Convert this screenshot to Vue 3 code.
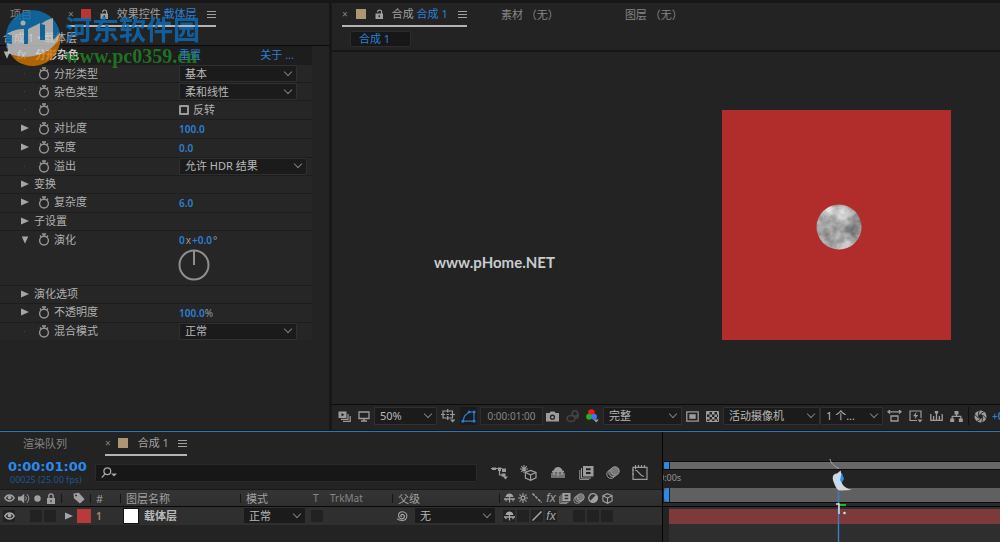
<script setup>
import { h, ref } from 'vue'

const icons = {
  watch: [12, 13, '<g fill="none" stroke="currentColor" stroke-width="1.4"><circle cx="6" cy="7.6" r="4.4"/><path d="M4 1h4M6 1v2.4M2 2.6l1.4 1.4M10 2.6L8.6 4"/></g>'],
  lock: [10, 11, '<path fill="currentColor" fill-rule="evenodd" d="M1 5h8v6H1zM4.4 7v2.2h1.2V7z"/><path fill="none" stroke="currentColor" stroke-width="1.3" d="M2.8 5V3a2.2 2.2 0 0 1 4.4 0v2"/>'],
  unlock: [9, 11, '<path fill="currentColor" fill-rule="evenodd" d="M.5 4.6h7.500v5.400h-7.500zM3.600 6.300v2h1.300v-2z"/><path fill="none" stroke="currentColor" stroke-width="1.2" d="M2.600 3.200C2.600 .4 6.600 .2 6.600 3v2"/>'],
  menu: [9, 9, '<path stroke="currentColor" stroke-width="1.2" d="M0 1.5h9M0 4.5h9M0 7.5h9"/>'],
  right: [8, 8, '<path fill="currentColor" d="M0 0.5L8 4L0 7.5z"/>'],
  down: [8, 8, '<path fill="currentColor" d="M0.8 0.5h6.4L4 7.8z"/>'],
  eye: [11, 8, '<path fill="none" stroke="currentColor" stroke-width="1.5" d="M.8 4C3 0 8 0 10.2 4C8 8 3 8 .8 4z"/><circle cx="5.5" cy="3.6" r="1.9" fill="currentColor"/>'],
  speaker: [12, 11, '<path fill="currentColor" d="M0 3.5h3L6.2.8v9.4L3 7.5H0z"/><path fill="none" stroke="currentColor" d="M7.6 3.5q1.6 2 0 4M9 1.2q3.6 4.3 0 8.6"/>'],
  dot: [7, 7, '<circle cx="3.5" cy="3.5" r="3.2" fill="currentColor"/>'],
  tag: [12, 12, '<path fill="currentColor" fill-rule="evenodd" d="M.5 1.5L5.8.8l5.8 6.4-4.7 4.4L.9 6.2zM3 2.4a1 1 0 1 0 .1 2a1 1 0 0 0-.1-2z"/>'],
  search: [17, 12, '<g fill="none" stroke="currentColor" stroke-width="1.3"><circle cx="6.3" cy="4.2" r="3.4"/><path d="M4 6.8L.8 10.6"/></g><path fill="currentColor" d="M10 6.5h6l-3 3z"/>'],
  stack: [13, 11, '<path fill="currentColor" fill-rule="evenodd" d="M.5.5h8v6.5h-8zM3.5 2v3.5L6.5 3.8z"/><path fill="none" stroke="currentColor" stroke-width="1.2" d="M3 8.4h7V3M5 10.4h7.2V5"/>'],
  monitor: [12, 11, '<path fill="none" stroke="currentColor" stroke-width="1.3" d="M1 1h10v6.5H1zM6 7.5v2.3M3 10h6"/>'],
  region: [15, 14, '<path fill="none" stroke="currentColor" stroke-width="1.2" d="M2 2h9.5v7H2zM0 5.5h4M9 5.5h5M6.7 0v3.5M6.7 7v4M5.5 5.5h2.4"/><path fill="currentColor" d="M9 10.5h5.4l-2.7 3z"/>'],
  mask: [15, 13, '<path fill="none" stroke="currentColor" stroke-width="1.2" d="M2 11.2L3.5 6L8 2h5v9.2z"/><path fill="currentColor" d="M.5 10h2.600v2.500h-2.600zM7 .8h2.400v2.400h-2.400zM11.900.8h2.500v2.500h-2.500zM11.900 10h2.500v2.500h-2.500z"/>'],
  camera: [13, 11, '<path fill="currentColor" fill-rule="evenodd" d="M0 2h3.5l1-1.6h4L9.5 2H13v8.5H0zM6.5 3.6a2.6 2.6 0 1 0 0 5.2a2.6 2.6 0 0 0 0-5.2z"/><circle cx="6.5" cy="6.2" r="1.3" fill="currentColor"/>'],
  ghost: [14, 13, '<g fill="none" stroke="currentColor" stroke-width="1.6"><circle cx="9" cy="3.5" r="2.7"/><ellipse cx="5" cy="8.500" rx="4" ry="3"/><path d="M8 8h3c1-1 1.500-2 1.500-4"/></g>'],
  rgb: [13, 14, '<circle cx="5.4" cy="3.6" r="3.300" fill="#f01818"/><circle cx="3.1" cy="7.700" r="3" fill="#18b818"/><circle cx="8" cy="7.700" r="3" fill="#4a70f0"/><path fill="currentColor" d="M7.5 10.5h5.4l-2.7 3z"/>'],
  roi: [13, 11, '<path fill="none" stroke="currentColor" stroke-width="1.3" d="M.8.8h11.4v9.4H.8z"/><path fill="currentColor" d="M3.3 3.2h6.4v4.6H3.3z"/>'],
  checker: [13, 11, '<path fill="none" stroke="currentColor" d="M.5.5h12v10H.5z"/><path fill="currentColor" d="M1 1h2.5v2.5H1zM6 1h2.5v2.5H6zM3.5 3.5H6V6H3.5zM8.5 3.5H11V6H8.5zM1 6h2.5v2.5H1zM6 6h2.5v2.5H6zM3.5 8.5H6V10H3.5zM8.5 8.5H11V10H8.5zM11 1h1.5v2.5H11zM11 6h1.5v2.5H11z"/>'],
  aspect: [15, 12, '<path fill="none" stroke="currentColor" stroke-width="1.3" d="M1 1.8h13M3 0L1 1.8L3 3.6M12 0l2 1.8l-2 1.8M4 6h7v5H4z"/>'],
  fast: [14, 13, '<path fill="none" stroke="currentColor" stroke-width="1.2" d="M8 10.5H1V1h11v7"/><path fill="currentColor" d="M7.5 1.8L4 6.2h2.4L5.5 9.6L9.2 5H6.8zM8.5 9.5h5l-2.5 3z"/>'],
  timeline: [13, 11, '<path fill="none" stroke="currentColor" stroke-width="1.3" d="M.8 3v6.3h11.4V3M3.6 9V5M6.5 9V3M9.4 9V5"/><path fill="currentColor" d="M4.8 0h3.4v2L6.5 3.6L4.8 2z"/>'],
  flow: [13, 11, '<path fill="currentColor" d="M4.5 0h4v3.6h-4zM.2 7.4h4V11h-4zM8.8 7.4h4V11h-4z"/><path fill="none" stroke="currentColor" stroke-width="1.2" d="M6.5 3v2.4M2.2 8V5.4h8.6V8"/>'],
  aperture: [13, 13, '<circle cx="6.5" cy="6.5" r="6" fill="currentColor"/><path fill="#232323" d="M6.5 3.9l2.3 1.3v2.6L6.5 9.1L4.2 7.8V5.2z"/><path stroke="#232323" stroke-width=".9" d="M6.5 3.9L10.5 1.2M8.8 5.2l3.2 3M8.8 7.8l-1 4.5M6.5 9.1l-4 2.6M4.2 7.8L1 4.8M4.2 5.2L5.2.8"/>'],
  tree: [17, 14, '<path fill="none" stroke="currentColor" stroke-width="1.2" d="M0 2.5h11M8.500 2.5v6.500h3"/><path fill="currentColor" d="M1 1.500h4v2.500H1zM7 1.500h3v3.5H7zM11 2.5h4V6h-4zM10.500 7.500h4v3h-4zM12 10.5h5l-2.5 3z"/>'],
  draft: [18, 16, '<path stroke="currentColor" stroke-width="1.1" d="M4 0v8M0 4h8M1.2 1.2l5.6 5.6M6.8 1.2L1.2 6.8"/><path fill="none" stroke="currentColor" stroke-width="1.2" d="M10.5 5.4L16 7.5v5.4l-5.4 2.4L5.4 13V7.5zM5.4 7.5l5.2 2.4L16 7.5M10.6 10v5"/>'],
  shy: [16, 13, '<path fill="currentColor" fill-opacity=".65" d="M1 7h14v5H1z"/><path fill="currentColor" d="M3.5 5.200C4 2.400 6 1 8 1S12 2.400 12.6 5.2z"/><path stroke="currentColor" stroke-width="1.600" d="M2 5.600h12M8 4v6M4 6v3M12 6v3"/>'],
  film: [15, 14, '<path fill="currentColor" fill-rule="evenodd" d="M4 0h10.5v10.5H4zM7 2.2v2h4.6v-2zM7 6v2h4.6V6z"/><path fill="none" stroke="currentColor" d="M2.5 2v10H12M.8 4v9.4h9.4"/>'],
  blur: [14, 13, '<circle cx="5" cy="8.2" r="4.2" fill="none" stroke="currentColor"/><circle cx="7" cy="6.6" r="4.2" fill="#555" stroke="currentColor"/><circle cx="9" cy="5" r="4.2" fill="#777" stroke="currentColor"/>'],
  graph: [16, 15, '<path fill="none" stroke="currentColor" stroke-width="1.2" d="M1 2.4h14v12H1zM3 5c4 0 4 6 9 6.5M3.5 0v4M6.5 0v3M9.5 0v3M12.5 0v3M0 5h2M0 9h2"/>'],
  shySm: [11, 10, '<path fill="currentColor" d="M1.5 4C2 1.4 3.6.4 5.5.4S9 1.4 9.5 4zM0 5.2h11v1.6H0z"/><path fill="none" stroke="currentColor" stroke-width="1.2" d="M5.5 3v6.6M2 6v2.2M9 6v2.2"/>'],
  sun: [10, 10, '<circle cx="5" cy="5" r="2" fill="none" stroke="currentColor" stroke-width="1.3"/><path stroke="currentColor" stroke-width="1.1" d="M5 0v2M5 8v2M0 5h2M8 5h2M1.5 1.5l1.2 1.2M7.3 7.3l1.2 1.2M8.5 1.5L7.3 2.7M2.7 7.3L1.5 8.5"/>'],
  backslash: [10, 10, '<path stroke="currentColor" stroke-width="1.5" stroke-dasharray="3 1" d="M.5.5l9 9"/>'],
  slash: [10, 10, '<path stroke="currentColor" stroke-width="1.5" d="M.5 9.5l9-9"/>'],
  half: [10, 10, '<circle cx="5" cy="5" r="4.3" fill="none" stroke="currentColor" stroke-width="1.2"/><path fill="currentColor" d="M8.4 1.6A4.8 4.8 0 0 1 1.6 8.4z"/>'],
  cube: [11, 11, '<path fill="none" stroke="currentColor" stroke-width="1.1" d="M5.5.7l4.6 2v5.2l-4.6 2.4L.9 7.9V2.7zM.9 2.7l4.6 2.2l4.6-2.2M5.5 5v5"/>'],
  whip: [12, 12, '<path fill="none" stroke="currentColor" stroke-width="1.1" d="M6 6.400c-1.600.4-1.800-2 .2-2c3 0 3 4.400-.4 4.400c-4.400 0-4.400-7 .6-7c5.600 0 6.400 8.600-.4 8.600c-2.400 0-4-.8-5-1.800"/>'],
}

const Icon = (props) => {
  const [w, ht, body] = icons[props.name]
  return h('svg', {
    class: 'ico', width: w, height: ht, viewBox: `0 0 ${w} ${ht}`, 'aria-hidden': 'true', innerHTML: body,
  })
}
Icon.props = ['name']

const props = [
  { label: '分形类型', watch: true, select: '基本' },
  { label: '杂色类型', watch: true, select: '柔和线性' },
  { label: '', watch: true, check: '反转' },
  { label: '对比度', watch: true, tw: 'right', value: '100.0' },
  { label: '亮度', watch: true, tw: 'right', value: '0.0' },
  { label: '溢出', watch: true, select: '允许  HDR 结果', wide: true },
  { label: '变换', tw: 'right' },
  { label: '复杂度', watch: true, tw: 'right', value: '6.0' },
  { label: '子设置', tw: 'right' },
  { label: '演化', watch: true, tw: 'down', dial: true },
  { label: '演化选项', tw: 'right' },
  { label: '不透明度', watch: true, tw: 'right', value: '100.0', unit: '%' },
  { label: '混合模式', watch: true, select: '正常' },
]
const inverted = ref(false)
const query = ref('')
const playhead = ref(52)
const headSwitches = ['shySm', 'sun', 'backslash', 'fx', 'film', 'blur', 'half', 'cube']
const rowSwitches = ['shySm', '', 'slash', 'fx', null, '', '', '']
</script>

<template>
  <div class="app">
    <div class="upper">
      <section class="panel effects">
        <div class="tabs">
          <button class="tab project">项目</button>
          <div class="tab active fx-tab">
            <button class="close" aria-label="关闭">×</button>
            <i class="chip red"></i>
            <Icon name="unlock" />
            <span>效果控件 <b class="blue">载体层</b></span>
            <Icon name="menu" />
          </div>
        </div>
        <div class="crumb">合成  1  •  载体层</div>
        <div class="fx-head">
          <Icon name="down" />
          <em class="fx">fx</em>
          <span class="fx-name">分形杂色</span>
          <button class="link reset">重置</button>
          <button class="link about">关于 ...</button>
        </div>
        <div class="props">
          <div v-for="(p, i) in props" :key="i" class="prop" :class="{ tall: p.dial }">
            <span class="twirl"><Icon v-if="p.tw" :name="p.tw" /><i v-else class="pip"></i></span>
            <span class="name"><Icon v-if="p.watch" name="watch" />{{ p.label }}</span>
            <span class="val">
              <span v-if="p.select" class="drop" :class="{ wide: p.wide }">
                <select :aria-label="p.label"><option>{{ p.select }}</option></select>
              </span>
              <label v-if="p.check" class="check"><input v-model="inverted" type="checkbox" />{{ p.check }}</label>
              <template v-if="p.value"><button class="num">{{ p.value }}</button><span class="unit">{{ p.unit }}</span></template>
              <template v-if="p.dial">
                <span class="angle"><button class="num">0</button><span class="unit">x</span><button class="num">+0.0</button><span class="unit">°</span></span>
                <svg class="dial" width="32" height="32" viewBox="0 0 32 32"><g fill="none" stroke="#8f8f8f" stroke-width="2"><circle cx="16" cy="16" r="14.500" /><path d="M16 1v15" /></g></svg>
              </template>
            </span>
          </div>
        </div>
      </section>

      <section class="panel viewer">
        <div class="tabs">
          <div class="tab active comp-tab">
            <button class="close" aria-label="关闭">×</button>
            <i class="chip tan"></i>
            <Icon name="unlock" />
            <span>合成 <b class="blue">合成 1</b></span>
            <Icon name="menu" />
          </div>
          <button class="tab footage">素材 （无）</button>
          <button class="tab layer">图层 （无）</button>
        </div>
        <div class="nav"><button class="comp-btn">合成 1</button></div>
        <div class="stage">
          <div class="solid">
            <svg class="moon" width="46" height="46" viewBox="0 0 46 46">
              <defs>
                <filter id="cloud" x="0" y="0" width="100%" height="100%" color-interpolation-filters="sRGB">
                  <feTurbulence type="fractalNoise" baseFrequency="0.06" numOctaves="4" seed="8" />
                  <feColorMatrix values="0.8 0 0 0 0.24  0.8 0 0 0 0.24  0.8 0 0 0 0.24  0 0 0 0 1" />
                </filter>
                <clipPath id="disc"><circle cx="23" cy="23" r="22.5" /></clipPath>
              </defs>
              <rect width="46" height="46" filter="url(#cloud)" clip-path="url(#disc)" />
            </svg>
          </div>
          <span class="stamp">www.pHome.NET</span>
        </div>
        <div class="toolbar">
          <Icon name="stack" />
          <Icon name="monitor" />
          <span class="drop zoom"><select aria-label="缩放"><option>50%</option></select></span>
          <Icon name="region" />
          <span class="boxed on"><Icon name="mask" /></span>
          <button class="time">0:00:01:00</button>
          <Icon name="camera" />
          <span class="dim"><Icon name="ghost" /></span>
          <Icon name="rgb" />
          <span class="drop res"><select aria-label="分辨率"><option>完整</option></select></span>
          <Icon name="roi" />
          <Icon name="checker" />
          <span class="drop cam"><select aria-label="摄像机"><option>活动摄像机</option></select></span>
          <span class="drop views"><select aria-label="视图"><option>1 个...</option></select></span>
          <Icon name="aspect" />
          <Icon name="fast" />
          <Icon name="timeline" />
          <Icon name="flow" />
          <i class="rule"></i>
          <Icon name="aperture" />
          <button class="num">+0.0</button>
        </div>
      </section>
    </div>

    <section class="panel lower">
      <div class="outline">
        <div class="tabs">
          <button class="tab queue">渲染队列</button>
          <div class="tab active tl-tab">
            <button class="close" aria-label="关闭">×</button>
            <i class="chip tan"></i>
            <span>合成  1</span>
            <Icon name="menu" />
          </div>
        </div>
        <div class="controls">
          <div class="clock"><strong>0:00:01:00</strong><small>00025 (25.00 fps)</small></div>
          <label class="search"><Icon name="search" /><input v-model="query" type="text" aria-label="搜索" /></label>
          <div class="tools">
            <Icon name="tree" /><Icon name="draft" /><Icon name="shy" /><Icon name="film" /><Icon name="blur" /><Icon name="graph" />
          </div>
        </div>
        <table class="layers">
          <colgroup><col class="c-av" /><col class="c-label" /><col class="c-no" /><col class="c-name" /><col class="c-mode" /><col class="c-t" /><col class="c-mat" /><col class="c-parent" /><col /></colgroup>
          <thead>
            <tr>
              <th><span class="av"><Icon name="eye" /><Icon name="speaker" /><Icon name="dot" /><Icon name="lock" /></span></th>
              <th class="tagcell"><Icon name="tag" /></th>
              <th>#</th>
              <th>图层名称</th>
              <th>模式</th>
              <th class="bare">T</th>
              <th>TrkMat</th>
              <th>父级</th>
              <th><span class="switches"><span v-for="s in headSwitches" :key="s" class="sw"><em v-if="s === 'fx'" class="fx">fx</em><Icon v-else :name="s" /></span></span></th>
            </tr>
          </thead>
          <tbody>
            <tr>
              <td><span class="boxes"><i class="box"><Icon name="eye" /></i><i class="box second"></i><i class="box"></i></span></td>
              <td><span class="color"><Icon name="right" /><i class="swatch"></i></span></td>
              <td><b class="idx">1</b></td>
              <td><span class="lname"><i class="white"></i><b>载体层</b></span></td>
              <td><span class="drop mode"><select aria-label="模式"><option>正常</option></select></span></td>
              <td class="bare"><i class="box"></i></td>
              <td></td>
              <td><span class="parent"><Icon name="whip" /><span class="drop"><select aria-label="父级"><option>无</option></select></span></span></td>
              <td><span class="switches"><span v-for="(s, i) in rowSwitches" :key="i" class="sw" :class="{ cell: s !== null }"><em v-if="s === 'fx'" class="fx">fx</em><Icon v-else-if="s" :name="s" /></span></span></td>
            </tr>
          </tbody>
        </table>
      </div>

      <div class="timeline">
        <div class="navigator"><i class="handle"></i></div>
        <div class="ruler"><span>0:00s</span></div>
        <div class="workarea"><i class="handle"></i></div>
        <div class="cache"></div>
        <div class="track"><i class="bar"></i></div>
        <div class="playhead" :style="{ left: playhead + '%' }">
          <svg width="34" height="84" viewBox="0 0 34 84">
            <path d="M12.500 28v56" stroke="#3a80c4" stroke-width="1.400" />
            <path d="M13 46h7v2h-7z" fill="#12c21c" />
            <path d="M4 1c1 5 4 6 6 8l3 1.500" fill="none" stroke="#a8a8a8" />
            <path d="M13 15h3l2 6-3 5h-2z" fill="#2d8ceb" />
            <path d="M14.700 12.500L11 15.500C6 16 6 20 8 25c1.500 4 3 7 6 7.500l12-.5c-4-1-7-2.500-9-5l-3-5c1-3 1.500-6 .7-9.500z" fill="#d6d6d6" />
            <path d="M9.500 17.500l3.500-1.500 1 7 2 4-3 2-3-5z" fill="#bfddff" />
            <path d="M10 46h3v10" fill="none" stroke="#ddd" stroke-width="1.500" />
            <circle cx="18.500" cy="55" r="1.300" fill="#ddd" />
          </svg>
        </div>
      </div>
    </section>

    <div class="mark" aria-hidden="true">
      <svg width="58" height="58" viewBox="0 0 58 58">
        <path d="M1 31A27 27 0 0 1 55 24C45 36 24 43 1 38z" fill="#0d74b8" />
        <path d="M3 38c20 5 42-3 52-15c3 14-7 32-26 33C14 56 6 48 3 38z" fill="#d97900" />
        <path d="M2 33l5 1v-9l-5-1c6-4 11-5 17-5v15h4V19l12-6v17h5V15l-4-1c5-4 9-5 12-6v22c4-3 6-5 7-8c-1 20-31 31-52 21z" fill="#d2d2d2" />
        <circle cx="18" cy="13" r="2.500" fill="#d2d2d2" />
      </svg>
      <div class="words"><span class="cn">河东软件园</span><span class="url">www.pc0359.cn</span></div>
    </div>
  </div>
</template>

<style>
html, body { background: #171717; }
</style>

<style scoped>
.app { position: relative; display: flex; flex-direction: column; gap: 1px; min-height: 100vh; box-sizing: border-box; padding-top: 3px; overflow: hidden; background: #171717; color: #a6a6a6; font: 11px/16px "Noto Sans", "Noto Sans CJK SC", sans-serif; }
.app *, .app *::before { box-sizing: border-box; }
button { padding: 0; border: 0; background: none; color: inherit; font: inherit; white-space: nowrap; }
i { display: block; flex: none; }
.ico { display: block; flex: none; }
.upper { flex: 1; display: flex; gap: 3px; min-height: 427px; }
.panel { background: #232323; }
.effects { flex: none; width: 329px; }
.viewer { flex: 1; min-width: 0; display: flex; flex-direction: column; overflow: hidden; }
.blue, .num, .link { color: #2d7fd3; font-weight: 400; }

.tabs { display: flex; height: 24px; color: #858585; }
.tab { display: flex; align-items: center; height: 24px; white-space: pre; }
.tab.active { border-bottom: 2px solid #b4b4b4; color: #a0a0a0; }
.project { margin-left: 10px; width: 58px; }
.close { color: #858585; font-size: 10px; }
.chip { width: 10px; height: 10px; }
.chip.red { background: #b83538; }
.chip.tan { background: #ac9674; }
.fx-tab { width: 148px; }
.fx-tab .chip { margin: 0 9px 0 7px; }
.fx-tab > span { margin: 0 auto 0 8px; }
.comp-tab > span { margin: 0 auto 0 8px; }
.comp-tab { width: 125px; margin-left: 10px; }
.comp-tab .chip { margin: 0 9px 0 8px; }
.footage { margin-left: 34px; }
.layer { margin-left: 66px; }
.crumb { height: 19px; padding: 3px 0 0 3px; border-bottom: 1px solid #0a0a0a; color: #b0b0b0; white-space: pre; }

.fx-head { display: flex; align-items: center; width: 312px; height: 18px; padding-left: 3px; background: #1d1d1d; color: #b0b0b0; }
.fx { font: italic 12px/12px "Liberation Sans", sans-serif; }
.fx-head .fx { margin-left: 6px; width: 18px; }
.fx-name { width: 144px; font-weight: 700; color: #c4c4c4; }
.about { margin: 0 18px 0 auto; }

.props { display: grid; grid-template-rows: repeat(15, 1fr); width: 312px; height: 276px; }
.prop { display: flex; align-items: flex-start; padding-left: 21px; border-top: 1px solid #1d1d1d; background: #262626; line-height: 18px; }
.prop.tall { grid-row: span 3; }
.twirl { display: flex; align-items: center; width: 13px; height: 17px; }
.pip { width: 1px; height: 1px; margin-left: 3px; background: #444; }
.name { display: flex; align-items: center; gap: 4px; width: 145px; height: 17px; color: #b0b0b0; }
.name .ico { margin-left: 4px; color: #949494; }
.num { font-size: 10px; font-weight: 600; }
.unit { color: #999; font-size: 10px; }
.val { line-height: 18px; white-space: nowrap; }
.dial { display: block; margin-left: -1px; }
.angle { display: flex; gap: 1px; height: 18px; }
.check { display: flex; align-items: center; gap: 4px; height: 17px; color: #b0b0b0; }
.check input { appearance: none; width: 10px; height: 10px; margin: 0; border: 2px solid #9a9a9a; border-radius: 1px; }
.check input:checked { background: #2d7fd3; }

.drop { position: relative; display: block; width: 118px; height: 17px; }
.drop.wide { width: 128px; }
.drop select { appearance: none; display: block; width: 100%; height: 100%; padding: 0 16px 0 5px; border: 1px solid #303030; border-radius: 1px; outline: 0; background: #1b1b1b; color: #b8b8b8; font: inherit; line-height: 14px; white-space: pre; }
.drop::before { content: ""; position: absolute; right: 6px; top: 50%; width: 6px; height: 6px; margin-top: -5px; border: solid #7e7e7e; border-width: 0 1px 1px 0; transform: rotate(45deg); }

.nav { height: 25px; padding: 4px 0 0 18px; border-bottom: 2px solid #171717; }
.comp-btn { display: block; width: 61px; height: 16px; padding-left: 8px; border: 1px solid #2c2c2c; border-radius: 2px; background: #171717; color: #2d7fd3; text-align: left; line-height: 14px; }
.stage { position: relative; flex: 1; display: flex; justify-content: flex-end; align-items: flex-start; padding: 58px 49px 0 0; }
.solid { display: grid; place-items: center; width: 229px; height: 230px; padding: 4px 0 0 4px; background: #b12d2b; }
.stamp { position: absolute; left: 102px; top: 200px; color: #c8cccc; font: 700 15px/20px Lato, sans-serif; }
.toolbar { display: flex; align-items: center; gap: 7px; height: 26px; padding: 0 0 3px 6px; border-top: 1px solid #0c0c0c; color: #9c9c9c; }
.toolbar .drop { flex: none; height: 18px; margin: 0 -3px; }
.toolbar .zoom { width: 63px; }
.toolbar .res { width: 79px; }
.toolbar .cam { width: 97px; }
.toolbar .views { width: 63px; margin-left: -4px; }
.boxed.on { display: flex; align-items: center; height: 18px; margin: 0 -3px; padding: 0 1px; background: #1b1b1b; color: #2d7fd3; }
.time { flex: none; width: 63px; height: 18px; margin: 0 -4px 0 -1px; border: 1px solid #2d2d2d; background: #1e1e1e; color: #858585; font-size: 10px; }
.dim { margin-right: -1px; color: #444; }
.rule { width: 1px; height: 18px; margin: 0 -2px; background: #111; }
.toolbar .num { margin-left: -2px; }

.lower { display: flex; height: 111px; border-top: 1px solid #2a76bc; }
.outline { flex: 0 1 663px; min-width: 0; border-right: 1px solid #050505; }
.queue { margin-left: 23px; width: 82px; }
.tl-tab { width: 82px; color: #a6a6a6; }
.tl-tab .chip { margin: 0 10px 0 7px; }
.tl-tab > span { margin-right: auto; }
.controls { display: flex; align-items: center; height: 33px; padding-left: 8px; }
.clock { width: 89px; white-space: nowrap; }
.clock strong { display: block; color: #2a8bee; font: 700 13px/15px "DejaVu Sans", sans-serif; }
.clock small { display: block; padding-left: 2px; color: #1f548a; font-size: 9px; line-height: 12px; }
.search { flex: 1; display: flex; align-items: center; min-width: 0; height: 18px; margin-left: -2px; padding-left: 5px; border: 1px solid #2a2a2a; border-radius: 2px; background: #171717; }
.search input { flex: 1; min-width: 0; height: 14px; border: 0; outline: 0; background: none; color: #b0b0b0; font: inherit; }
.tools { display: flex; align-items: center; justify-content: space-between; width: 157px; margin: 0 14px; color: #9c9c9c; }

.layers { table-layout: fixed; width: 100%; border-collapse: collapse; }
.c-av { width: 62px; } .c-label { width: 29px; } .c-no { width: 30px; } .c-name { width: 120px; }
.c-mode { width: 69px; } .c-t { width: 15px; } .c-mat { width: 68px; } .c-parent { width: 107px; }
th, td { padding: 0 0 0 5px; font-weight: 400; text-align: left; white-space: nowrap; }
thead { background: linear-gradient(#343434, #2f2f2f); }
th { position: relative; height: 17px; border-top: 1px solid #191919; border-bottom: 1px solid #080808; line-height: 15px; color: #a0a0a0; }
th + th:not(.bare)::before { content: ""; position: absolute; left: -1px; top: 4px; width: 1px; height: 9px; background: #161616; }
.bare + th::before { display: none; }
th:nth-child(6), th:nth-child(7) { font-size: 10px; color: #858585; }
td { height: 18px; background: #2f2f2f; }
.av { display: flex; align-items: center; gap: 3px; margin-left: -1px; }
.av .ico:nth-child(3) { margin: 0 2px 0 1px; }
.tagcell { padding-left: 11px; }
.switches { display: flex; gap: 2px; margin-left: -2px; }
.sw { display: grid; place-items: center; width: 12px; height: 12px; overflow: hidden; }
.sw.cell, .box { background: #222; }
.sw .ico { max-width: 12px; max-height: 11px; }
.boxes { display: flex; gap: 2px; margin-left: -2px; }
.box { display: grid; place-items: center; width: 12px; height: 12px; }
.second { margin-left: 13px; }
.bare { padding-left: 3px; }
td.bare { padding-left: 1px; }
.color { display: flex; align-items: center; gap: 4px; margin-left: -2px; }
.swatch { width: 14px; height: 14px; background: #b83a3a; }
.idx { color: #a88e78; font-size: 10px; font-weight: 600; }
.lname { display: flex; align-items: center; gap: 6px; margin-left: -2px; color: #bcbcbc; }
.white { width: 14px; height: 14px; background: #fff; outline: 1px solid #111; }
.mode { width: 63px; margin-left: -3px; }
.parent { display: flex; align-items: center; gap: 6px; margin-left: -2px; }
.parent .drop { width: 82px; }

.timeline { position: relative; flex: 1; display: flex; flex-direction: column; min-width: 0; padding-top: 29px; overflow: hidden; }
.navigator { height: 8px; margin-left: 1px; border-top: 1px solid #0d0d0d; background: #676767; }
.navigator .handle, .workarea .handle { width: 6px; height: 100%; border-right: 1px solid #222; border-radius: 5px 0 0 5px; background: #2a8bee; }
.ruler { height: 19px; border-top: 1px solid #0d0d0d; color: #949494; font-size: 9px; line-height: 15px; }
.ruler span { margin-left: -4px; }
.workarea { height: 14px; margin-left: 1px; background: #606060; }
.cache { height: 5px; border-bottom: 1px solid #050505; border-top: 1px solid #0d0d0d; background: #2a2a2a; }
.track { flex: 1; margin-left: 6px; padding-top: 2px; background: #2e2e2e; }
.bar { height: 15px; background: #7c3a3a; }
.playhead { position: absolute; bottom: 0; margin-left: -12px; line-height: 0; }

.mark { position: absolute; left: 5px; top: 10px; display: flex; opacity: .78; pointer-events: none; }
.words { margin: 3px 0 0 2px; }
.cn, .url { display: block; white-space: nowrap; }
.cn { color: #0b70bf; font: 700 27px/32px "Noto Sans CJK SC", sans-serif; }
.url { color: #218a25; font: 700 20px/23px "Liberation Serif", serif; }
</style>
